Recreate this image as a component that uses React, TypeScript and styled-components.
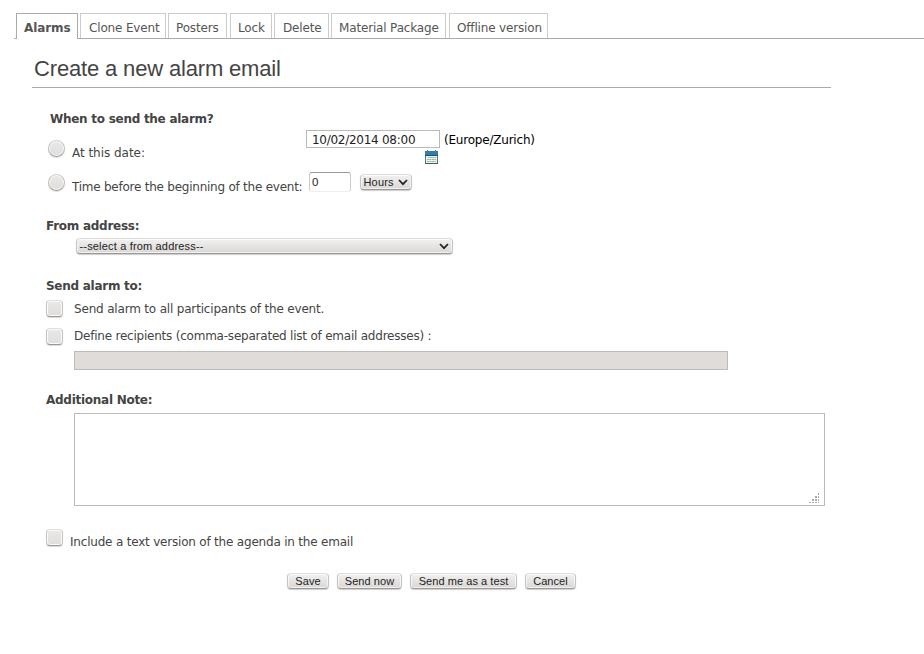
import React from "react";
import styled, { createGlobalStyle, css } from "styled-components";

const GlobalStyle = createGlobalStyle`
  * { box-sizing: border-box; }
  body {
    margin: 0;
    background: #fff;
    color: #444;
    font: 12px/14px "DejaVu Sans", Verdana, sans-serif;
    letter-spacing: -0.21px;
  }
`;

const Page = styled.main`
  width: 924px;
  height: 654px;
  padding-top: 13px;
  overflow: hidden;
`;

const TabBar = styled.nav`
  display: flex;
  height: 26px;
  margin-left: 14px;
  padding-left: 2px;
  border-bottom: 1px solid #aaa;
`;

const Tab = styled.a<{ $width: number; $gap?: number; $active?: boolean; $inset?: number }>`
  width: ${(p) => p.$width}px;
  height: ${(p) => (p.$active ? 26 : 25)}px;
  margin-right: ${(p) => p.$gap ?? 2}px;
  padding: 7px 0 0 ${(p) => p.$inset ?? 7}px;
  border: 1px solid ${(p) => (p.$active ? "#aaa" : "#ccc")};
  border-bottom: 0;
  background: #fff;
  color: #555;
  font-weight: ${(p) => (p.$active ? "bold" : "normal")};
  letter-spacing: ${(p) => (p.$active ? "-0.1px" : "-0.16px")};
  white-space: nowrap;
`;

const Content = styled.form`
  width: 799px;
  margin-left: 32px;
`;

const Title = styled.h1`
  height: 49px;
  margin: 0;
  padding: 17px 0 0 2px;
  border-bottom: 1px solid #aaa;
  font: 22px/25px "Liberation Sans", Arial, sans-serif;
  letter-spacing: -0.16px;
  white-space: nowrap;
`;

const Section = styled.section<{ $top: number; $left?: number }>`
  padding: ${(p) => p.$top}px 0 0 ${(p) => p.$left ?? 14}px;
`;

const Label = styled.h2<{ $indent?: number }>`
  margin: 0 0 0 ${(p) => p.$indent ?? 0}px;
  font: bold 12px/14px "DejaVu Sans", Verdana, sans-serif;
  letter-spacing: -0.27px;
`;

const Row = styled.div<{ $height: number; $top?: number }>`
  display: flex;
  align-items: flex-start;
  height: ${(p) => p.$height}px;
  margin-top: ${(p) => p.$top ?? 0}px;
`;

const Text = styled.span<{ $width?: number; $top?: number; $left?: number; $dark?: boolean; $spacing?: number }>`
  flex: none;
  width: ${(p) => (p.$width ? `${p.$width}px` : "auto")};
  margin: ${(p) => p.$top ?? 0}px 0 0 ${(p) => p.$left ?? 0}px;
  color: ${(p) => (p.$dark ? "#000" : "inherit")};
  letter-spacing: ${(p) => p.$spacing ?? -0.21}px;
  white-space: nowrap;
`;

const raised = css`
  border: 1px solid #c4c4c4;
  border-top-color: #ddd;
  border-bottom-color: #999;
  background: linear-gradient(#f2f1f0, #dad7d5);
  box-shadow: inset 0 0 0 1px rgba(255, 255, 255, 0.65), 0 1px 1px rgba(0, 0, 0, 0.2);
`;

const Toggle = styled.span<{ $round?: boolean; $top?: number }>`
  ${raised}
  flex: none;
  width: 17px;
  height: 17px;
  margin-top: ${(p) => p.$top ?? 0}px;
  border-color: ${(p) => (p.$round ? "#d0d0d0 #bbb #999" : "#ddd #c4c4c4 #999")};
  border-radius: ${(p) => (p.$round ? "50%" : "4px")};
  background: linear-gradient(#e9e8e7, #e0dedd);
  box-shadow: inset 0 0 0 1px rgba(255, 255, 255, 0.8), 0 1px 1px rgba(0, 0, 0, 0.15);
`;

const DateField = styled.div`
  width: 134px;
  margin-top: 3px;
`;

const DateInput = styled.input`
  display: block;
  width: 134px;
  height: 18px;
  padding: 1px 0 0 5px;
  border: 1px solid #bbb;
  color: #222;
  font: 12px/14px "DejaVu Sans", Verdana, sans-serif;
  letter-spacing: -0.27px;
  outline: 0;
`;

const Calendar = styled.svg`
  display: block;
  margin: 2px 0 0 118px;
`;

const NumberInput = styled.input`
  width: 42px;
  height: 20px;
  padding: 0 0 0 2px;
  border: 1px solid #ccc;
  border-top-color: #999;
  border-bottom-color: #eee;
  border-radius: 3px;
  color: #222;
  font: 11.5px/13px "Liberation Sans", Arial, sans-serif;
  outline: 0;
`;

const SelectBox = styled.div<{ $width: number }>`
  ${raised}
  display: flex;
  align-items: center;
  justify-content: space-between;
  width: ${(p) => p.$width}px;
  height: 16px;
  padding: 0 3px 0 2.5px;
  border-radius: 4px;
  color: #222;
  font: 11px/13px "Liberation Sans", Arial, sans-serif;
  letter-spacing: 0.17px;
  white-space: nowrap;
`;

const Recipients = styled.div`
  width: 654px;
  height: 19px;
  margin: 7px 0 0 28px;
  border: 1px solid #bbb;
  background: #e0dcd9;
`;

const Note = styled.div`
  display: flex;
  align-items: flex-end;
  justify-content: flex-end;
  width: 751px;
  height: 93px;
  margin: 6px 0 0 28px;
  padding: 0 4px 1px 0;
  border: 1px solid #bbb;
`;

const Actions = styled.div`
  display: flex;
  gap: 8px;
  margin: 27px 0 0 255px;
`;

const Button = styled.button<{ $width: number }>`
  ${raised}
  width: ${(p) => p.$width}px;
  height: 16px;
  padding: 0;
  border-radius: 4px;
  color: #222;
  font: 11px/13px "Liberation Sans", Arial, sans-serif;
  letter-spacing: 0.06px;
  white-space: nowrap;
`;

const Chevron = () => (
  <svg width="10" height="7" viewBox="0 0 10 7" fill="none" stroke="#222" strokeWidth="1.7">
    <path d="M1 1l4 4.2L9 1" />
  </svg>
);

const Grip = () => (
  <svg width="12" height="12" viewBox="0 0 12 12" fill="#aaa">
    {[[10, 0], [7, 3], [10, 3], [4, 6], [7, 6], [10, 6], [1, 9], [4, 9], [7, 9], [10, 9]].map(([x, y]) => (
      <rect key={`${x}-${y}`} x={x} y={y + 1} width={x === 10 ? 1 : 2} height={y === 9 ? 1 : 2} />
    ))}
  </svg>
);

const tabs = [
  { name: "Alarms", width: 62, active: true },
  { name: "Clone Event", width: 86, inset: 8 },
  { name: "Posters", width: 59, gap: 3 },
  { name: "Lock", width: 42 },
  { name: "Delete", width: 55, inset: 8 },
  { name: "Material Package", width: 115, gap: 3 },
  { name: "Offline version", width: 99 },
];

export default function App() {
  return (
    <Page>
      <GlobalStyle />
      <TabBar>
        {tabs.map((t) => (
          <Tab key={t.name} $width={t.width} $gap={t.gap} $active={t.active} $inset={t.inset}>{t.name}</Tab>
        ))}
      </TabBar>
      <Content onSubmit={(e) => e.preventDefault()}>
        <Title>Create a new alarm email</Title>
        <Section $top={24} $left={16}>
          <Label $indent={2}>When to send the alarm?</Label>
          <Row $height={45} $top={1}>
            <Toggle $round $top={13} />
            <Text $left={7} $top={19} $width={234} $spacing={-0.03}>At this date:</Text>
            <DateField>
              <DateInput defaultValue="10/02/2014 08:00" />
              <Calendar width="15" height="15" viewBox="0 0 15 15">
                <path d="M1.5 2.5h12v11h-12z" fill="#eef4f0" stroke="#55767e" />
                <path d="M1 1h13v4H1z" fill="#2b7fb0" />
                <path d="M1 5h13v1H1z" fill="#23506a" />
                <path d="M3.5 0v3M11.5 0v3" stroke="#5f7680" />
                <path d="M4 7.5h8" stroke="#a9bdb8" />
                <path d="M3 9.5h9M3 11.5h9" stroke="#9ab0ab" strokeDasharray="2 0.5" />
                <path d="M1 13.5h13" stroke="#2f6468" />
              </Calendar>
            </DateField>
            <Text $left={4} $top={6} $dark>(Europe/Zurich)</Text>
          </Row>
          <Row $height={20}>
            <Toggle $round $top={2} />
            <Text $left={7} $top={8} $width={237} $spacing={-0.24}>Time before the beginning of the event:</Text>
            <NumberInput defaultValue="0" />
            <Text $left={9} $top={2}><SelectBox $width={52}>Hours<Chevron /></SelectBox></Text>
          </Row>
        </Section>
        <Section $top={27}>
          <Label>From address:</Label>
          <Row $height={16} $top={5}>
            <Text $left={30}><SelectBox $width={377}>--select a from address--<Chevron /></SelectBox></Text>
          </Row>
        </Section>
        <Section $top={25}>
          <Label>Send alarm to:</Label>
          <Row $height={18} $top={7}>
            <Toggle />
            <Text $left={11} $top={2} $spacing={-0.18}>Send alarm to all participants of the event.</Text>
          </Row>
          <Row $height={17} $top={9}>
            <Toggle $top={1} />
            <Text $left={11} $top={2} $spacing={-0.22}>Define recipients (comma-separated list of email addresses) :</Text>
          </Row>
          <Recipients />
        </Section>
        <Section $top={23}>
          <Label>Additional Note:</Label>
          <Note><Grip /></Note>
        </Section>
        <Section $top={23}>
          <Row $height={17}>
            <Toggle />
            <Text $left={7} $top={6} $spacing={-0.2}>Include a text version of the agenda in the email</Text>
          </Row>
        </Section>
        <Actions>
          <Button $width={42}>Save</Button>
          <Button $width={65}>Send now</Button>
          <Button $width={107}>Send me as a test</Button>
          <Button $width={51}>Cancel</Button>
        </Actions>
      </Content>
    </Page>
  );
}
